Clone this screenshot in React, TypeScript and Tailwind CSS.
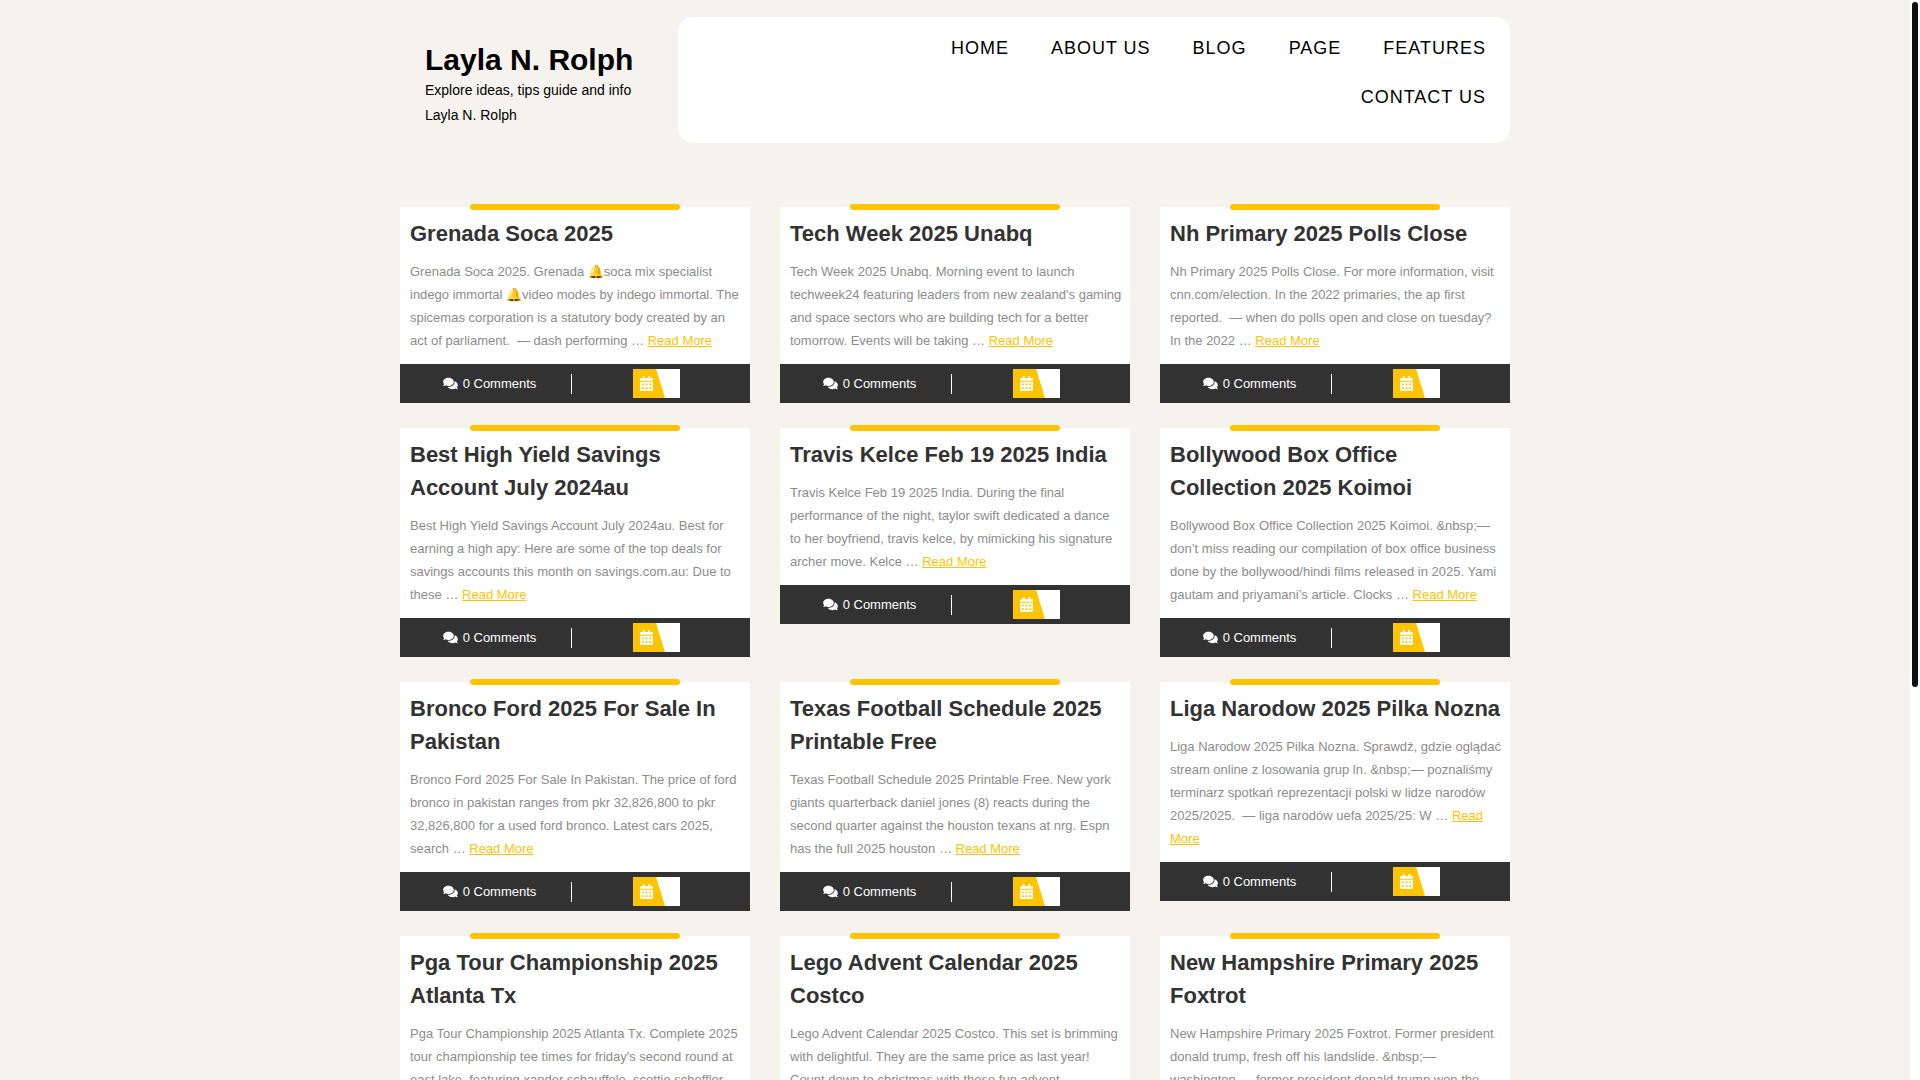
import { FaCalendarAlt, FaComments } from "react-icons/fa";

const navLinks = ["Home", "About Us", "Blog", "Page", "Features", "Contact Us"];

const posts = [
  {
    title: "Grenada Soca 2025",
    text: "Grenada Soca 2025. Grenada 🔔soca mix specialist indego immortal 🔔video modes by indego immortal. The spicemas corporation is a statutory body created by an act of parliament. \u00a0— dash performing …",
  },
  {
    title: "Tech Week 2025 Unabq",
    text: "Tech Week 2025 Unabq. Morning event to launch techweek24 featuring leaders from new zealand's gaming and space sectors who are building tech for a better tomorrow. Events will be taking …",
  },
  {
    title: "Nh Primary 2025 Polls Close",
    text: "Nh Primary 2025 Polls Close. For more information, visit cnn.com/election. In the 2022 primaries, the ap first reported. \u00a0— when do polls open and close on tuesday? In the 2022 …",
  },
  {
    title: "Best High Yield Savings Account July 2024au",
    text: "Best High Yield Savings Account July 2024au. Best for earning a high apy: Here are some of the top deals for savings accounts this month on savings.com.au: Due to these …",
  },
  {
    title: "Travis Kelce Feb 19 2025 India",
    text: "Travis Kelce Feb 19 2025 India. During the final performance of the night, taylor swift dedicated a dance to her boyfriend, travis kelce, by mimicking his signature archer move. Kelce …",
  },
  {
    title: "Bollywood Box Office Collection 2025 Koimoi",
    text: "Bollywood Box Office Collection 2025 Koimoi. &nbsp;— don’t miss reading our compilation of box office business done by the bollywood/hindi films released in 2025. Yami gautam and priyamani’s article. Clocks …",
  },
  {
    title: "Bronco Ford 2025 For Sale In Pakistan",
    text: "Bronco Ford 2025 For Sale In Pakistan. The price of ford bronco in pakistan ranges from pkr 32,826,800 to pkr 32,826,800 for a used ford bronco. Latest cars 2025, search …",
  },
  {
    title: "Texas Football Schedule 2025 Printable Free",
    text: "Texas Football Schedule 2025 Printable Free. New york giants quarterback daniel jones (8) reacts during the second quarter against the houston texans at nrg. Espn has the full 2025 houston …",
  },
  {
    title: "Liga Narodow 2025 Pilka Nozna",
    text: "Liga Narodow 2025 Pilka Nozna. Sprawdź, gdzie oglądać stream online z losowania grup ln. &nbsp;— poznaliśmy terminarz spotkań reprezentacji polski w lidze narodów 2025/2025. \u00a0— liga narodów uefa 2025/25: W …",
  },
  {
    title: "Pga Tour Championship 2025 Atlanta Tx",
    text: "Pga Tour Championship 2025 Atlanta Tx. Complete 2025 tour championship tee times for friday's second round at east lake, featuring xander schauffele, scottie scheffler championship\u00a0…",
  },
  {
    title: "Lego Advent Calendar 2025 Costco",
    text: "Lego Advent Calendar 2025 Costco. This set is brimming with delightful. They are the same price as last year! Count down to christmas with these fun advent calendars\u00a0…",
  },
  {
    title: "New Hampshire Primary 2025 Foxtrot",
    text: "New Hampshire Primary 2025 Foxtrot. Former president donald trump, fresh off his landslide. &nbsp;— washington — former president donald trump won the primary\u00a0…",
  },
];

function Header() {
  return (
    <header className="flex items-stretch pt-[17px]">
      <div className="w-1/4 px-[25px] pt-[25px]">
        <h1 className="text-[30px] leading-9 font-bold text-black">
          <a href="#">Layla N. Rolph</a>
        </h1>
        <p className="text-sm leading-[25px] text-black">
          Explore ideas, tips guide and info Layla N. Rolph
        </p>
      </div>
      <nav className="flex flex-1 justify-end rounded-[15px] bg-white px-6 pt-[7px] pb-[21px]">
        <ul className="flex max-w-[680px] flex-wrap justify-end gap-x-[42px]">
          {navLinks.map((link) => (
            <li key={link}>
              <a
                href="#"
                className="block text-lg leading-[49px] tracking-[1px] text-black uppercase"
              >
                {link}
              </a>
            </li>
          ))}
        </ul>
      </nav>
    </header>
  );
}

function PostCard({ title, text }: { title: string; text: string }) {
  return (
    <article className="relative bg-white">
      {/* Accent bar over the top edge */}
      <div className="absolute -top-[3px] left-1/5 h-[6px] w-3/5 rounded-[3px] bg-[#ffc400]" />
      <div className="pt-[10px] pr-[7px] pb-3 pl-[10px]">
        <h2 className="mb-[10px] text-[22px] leading-[33px] font-bold text-[#323232]">
          <a href="#">{title}</a>
        </h2>
        <p className="text-[13px] leading-[23px] text-[#8c8c8c]">
          {text}{" "}
          <a href="#" className="text-[#ffc400] underline">
            Read More
          </a>
        </p>
      </div>
      <div className="flex h-[39px] items-center bg-[#323232] pr-[7px] text-[13px] text-white">
        <a href="#" className="flex basis-1/2 items-center justify-center gap-[5px] pl-2">
          <FaComments className="h-[13px] w-[15px]" />
          0 Comments
        </a>
        <div className="h-5 w-px bg-white" />
        <div className="flex basis-1/2 justify-center pr-0.5">
          <div className="h-[29px] w-[47px] bg-white">
            <div className="flex h-full w-8 items-center bg-[#ffc400] pl-[7px] [clip-path:polygon(0_0,72%_0,100%_100%,0_100%)]">
              <FaCalendarAlt className="h-[15px] w-[13px] text-white" />
            </div>
          </div>
        </div>
      </div>
    </article>
  );
}

export default function App() {
  return (
    <div className="flex h-screen bg-[#f6f3ee] font-['Liberation_Sans',Arial,sans-serif]">
      <div className="flex-1 overflow-y-auto [scrollbar-width:none]">
        <div className="mx-auto max-w-[1110px]">
          <Header />
          <main className="grid grid-cols-3 items-start gap-x-[30px] gap-y-[25px] pt-16 pb-16">
            {posts.map((post) => (
              <PostCard key={post.title} title={post.title} text={post.text} />
            ))}
          </main>
        </div>
      </div>
      {/* Scrollbar */}
      <div className="w-[10px] bg-white p-0.5">
        <div className="h-7/11 w-[6px] rounded-full bg-[#0d1011]" />
      </div>
    </div>
  );
}
